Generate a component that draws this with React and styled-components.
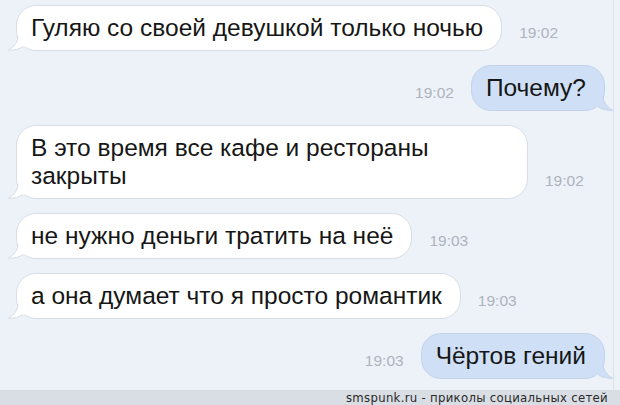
import React from "react";
import styled, { createGlobalStyle } from "styled-components";

const GlobalStyle = createGlobalStyle`
  html, body {
    margin: 0;
    padding: 0;
    background: #edf1f8;
  }
  #root {
    width: 620px;
    height: 405px;
    overflow: hidden;
  }
`;

const Screen = styled.div`
  width: 620px;
  height: 405px;
  display: flex;
  flex-direction: column;
  font-family: "Liberation Sans", Arial, sans-serif;
`;

const Main = styled.div`
  flex: 1;
  display: flex;
`;

const Chat = styled.div`
  flex: 1;
  display: flex;
  flex-direction: column;
  gap: 14px;
  padding: 5px 8px 0 16px;
  border-right: 1px solid #dde2ea;
`;

const Gutter = styled.div`
  width: 6px;
`;

const Row = styled.div`
  display: flex;
  align-items: flex-end;
  justify-content: ${({ $out }) => ($out ? "flex-end" : "flex-start")};
  gap: 17px;
`;

const Bubble = styled.div`
  position: relative;
  box-sizing: border-box;
  min-height: 46px;
  max-width: 512px;
  padding: 8px 18px 8px 14px;
  border-radius: 20px;
  font-size: 24.5px;
  line-height: 28px;
  color: #161616;
  background: ${({ $out }) => ($out ? "#cfe0f6" : "#ffffff")};
  border: 1px solid ${({ $out }) => ($out ? "#c3d4ea" : "#d9dee6")};
`;

const Tail = styled.svg`
  position: absolute;
  bottom: -1px;
  ${({ $out }) => ($out ? "right: -9px; transform: scaleX(-1);" : "left: -9px;")}
`;

const Time = styled.span`
  font-size: 15.5px;
  line-height: 16px;
  color: #adb4be;
  margin-bottom: 10px;
`;

const Footer = styled.div`
  height: 15px;
  background: #d9dde4;
  display: flex;
  justify-content: flex-end;
  align-items: center;
  padding-right: 12px;
  font-family: "DejaVu Sans Condensed", "DejaVu Sans", sans-serif;
  font-size: 13px;
  color: #2a2a2a;
  letter-spacing: 0.3px;
`;

const BubbleTail = ({ out }) => {
  const fill = out ? "#cfe0f6" : "#ffffff";
  const stroke = out ? "#c3d4ea" : "#d9dee6";
  return (
    <Tail $out={out} width="22" height="18" viewBox="0 0 22 18">
      <path d="M10 0 L10 3 C10 9 6 14 0.5 17.3 C6 17.6 12 16 15 13.5 L20 13.5 L20 0 Z" fill={fill} />
      <path d="M10 3 C10 9 6 14 0.5 17.3 C6 17.6 12 16 15 13.5" fill="none" stroke={stroke} strokeWidth="1" />
    </Tail>
  );
};

const messages = [
  { text: "Гуляю со своей девушкой только ночью", time: "19:02" },
  { text: "Почему?", time: "19:02", out: true },
  { text: "В это время все кафе и рестораны закрыты", time: "19:02" },
  { text: "не нужно деньги тратить на неё", time: "19:03" },
  { text: "а она думает что я просто романтик", time: "19:03" },
  { text: "Чёртов гений", time: "19:03", out: true },
];

export default function App() {
  return (
    <>
      <GlobalStyle />
      <Screen>
        <Main>
          <Chat>
            {messages.map((m, i) => (
              <Row key={i} $out={m.out}>
                {m.out && <Time>{m.time}</Time>}
                <Bubble $out={m.out}>
                  {m.text}
                  <BubbleTail out={m.out} />
                </Bubble>
                {!m.out && <Time>{m.time}</Time>}
              </Row>
            ))}
          </Chat>
          <Gutter />
        </Main>
        <Footer>smspunk.ru - приколы социальных сетей</Footer>
      </Screen>
    </>
  );
}
